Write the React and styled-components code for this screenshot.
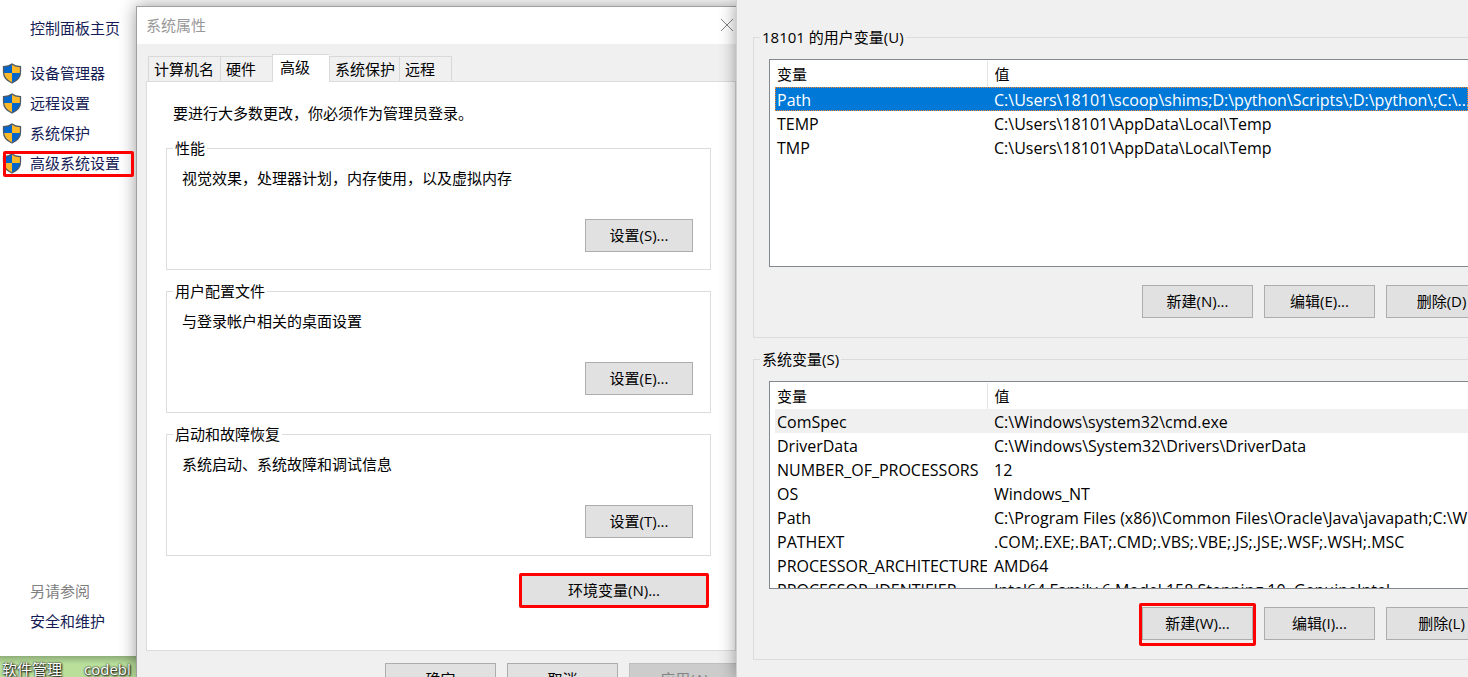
import React from "react";
import styled, { createGlobalStyle, css } from "styled-components";

const GlobalStyle = createGlobalStyle`
  * {
    box-sizing: border-box;
  }
  body {
    margin: 0;
    font-family: "Open Sans", "Noto Sans CJK SC", sans-serif;
    font-size: 15px;
    line-height: 24px;
    color: #000;
  }
`;

const sideLinks = [
  { text: "设备管理器" },
  { text: "远程设置" },
  { text: "系统保护" },
  { text: "高级系统设置", marked: true },
];

const tabs = [
  { text: "计算机名", width: 72 },
  { text: "硬件", width: 52 },
  { text: "高级", width: 57, active: true },
  { text: "系统保护", width: 70 },
  { text: "远程", width: 53 },
];

const sections = [
  { title: "性能", text: "视觉效果，处理器计划，内存使用，以及虚拟内存", button: "设置(S)..." },
  { title: "用户配置文件", text: "与登录帐户相关的桌面设置", button: "设置(E)..." },
  { title: "启动和故障恢复", text: "系统启动、系统故障和调试信息", button: "设置(T)..." },
];

const userVars = [
  { name: "Path", value: "C:\\Users\\18101\\scoop\\shims;D:\\python\\Scripts\\;D:\\python\\;C:\\...", state: "selected" },
  { name: "TEMP", value: "C:\\Users\\18101\\AppData\\Local\\Temp" },
  { name: "TMP", value: "C:\\Users\\18101\\AppData\\Local\\Temp" },
];

const systemVars = [
  { name: "ComSpec", value: "C:\\Windows\\system32\\cmd.exe", state: "inactive" },
  { name: "DriverData", value: "C:\\Windows\\System32\\Drivers\\DriverData" },
  { name: "NUMBER_OF_PROCESSORS", value: "12" },
  { name: "OS", value: "Windows_NT" },
  { name: "Path", value: "C:\\Program Files (x86)\\Common Files\\Oracle\\Java\\javapath;C:\\W..." },
  { name: "PATHEXT", value: ".COM;.EXE;.BAT;.CMD;.VBS;.VBE;.JS;.JSE;.WSF;.WSH;.MSC" },
  { name: "PROCESSOR_ARCHITECTURE", value: "AMD64" },
  { name: "PROCESSOR_IDENTIFIER", value: "Intel64 Family 6 Model 158 Stepping 10, GenuineIntel" },
];

const Shield = () => (
  <ShieldSvg viewBox="0 0 20 21" aria-hidden="true">
    <path d="M10 1C8 2.6 5 3.4 1.5 3.6V10H10z" fill="#0066cc" />
    <path d="M10 1c2 1.6 5 2.4 8.5 2.6V10H10z" fill="#fdb827" />
    <path d="M1.5 10H10v10C5 17.8 1.9 14.5 1.5 10z" fill="#fdb827" />
    <path d="M10 10h8.5c-.4 4.5-3.5 7.800-8.500 10z" fill="#0066cc" />
    <path
      d="M10 1C8 2.6 5 3.4 1.5 3.6V9c0 5 3 8.6 8.5 11 5.5-2.4 8.5-6 8.5-11V3.6C15 3.4 12 2.6 10 1z"
      fill="none"
      stroke="#4d5a66"
      strokeWidth="1.3"
    />
  </ShieldSvg>
);

const VariableTable = ({ label, rows }) => (
  <TableBox>
    <Table aria-label={label}>
      <colgroup>
        <NameCol />
        <col />
      </colgroup>
      <thead>
        <tr>
          <HeadCell>变量</HeadCell>
          <HeadCell>值</HeadCell>
        </tr>
      </thead>
      <tbody>
        {rows.map((row) => (
          <Row key={row.name} $state={row.state}>
            <Cell>{row.name}</Cell>
            <Cell>{row.value}</Cell>
          </Row>
        ))}
      </tbody>
    </Table>
  </TableBox>
);

const App = () => (
  <>
    <GlobalStyle />
    <Desktop>
      <Sidebar>
        <SideNav>
          <HomeLink href="#home">控制面板主页</HomeLink>
          {sideLinks.map((link) => (
            <SideItem key={link.text}>
              <Shield />
              <SideLink href="#settings">{link.text}</SideLink>
              {link.marked && <LinkMark />}
            </SideItem>
          ))}
        </SideNav>
        <SeeAlso>
          <SeeAlsoTitle>另请参阅</SeeAlsoTitle>
          <SideLink href="#security">安全和维护</SideLink>
        </SeeAlso>
        <Wallpaper>
          <span>软件管理</span>
          <span>codebl</span>
        </Wallpaper>
      </Sidebar>

      <PropertiesArea>
        <PropertiesWindow>
          <TitleBar>
            <Title>系统属性</Title>
            <CloseButton aria-label="关闭">
              <svg width="14" height="14" viewBox="0 0 14 14">
                <path d="M1 1l12 12M13 1L1 13" stroke="#808080" fill="none" />
              </svg>
            </CloseButton>
          </TitleBar>
          <TabList role="tablist">
            {tabs.map((tab) => (
              <Tab key={tab.text} role="tab" aria-selected={!!tab.active} $active={tab.active} $width={tab.width}>
                {tab.text}
              </Tab>
            ))}
          </TabList>
          <TabPanel role="tabpanel">
            <Notice>要进行大多数更改，你必须作为管理员登录。</Notice>
            <SectionList>
              {sections.map((section) => (
                <Section key={section.title}>
                  <Legend>{section.title}</Legend>
                  <SectionText>{section.text}</SectionText>
                  <Button $width={108}>{section.button}</Button>
                </Section>
              ))}
            </SectionList>
            <EnvironmentRow>
              <Button $width={188}>环境变量(N)...</Button>
              <ButtonMark />
            </EnvironmentRow>
          </TabPanel>
          <DialogFooter>
            <Button>确定</Button>
            <Button>取消</Button>
            <Button disabled>应用(A)</Button>
          </DialogFooter>
        </PropertiesWindow>
      </PropertiesArea>

      <VariablesWindow>
        <VariableGroup>
          <Legend>18101 的用户变量(U)</Legend>
          <VariableTable label="用户变量" rows={userVars} />
          <ButtonRow>
            <Button>新建(N)...</Button>
            <Button>编辑(E)...</Button>
            <Button>删除(D)</Button>
          </ButtonRow>
        </VariableGroup>
        <VariableGroup>
          <Legend>系统变量(S)</Legend>
          <VariableTable label="系统变量" rows={systemVars} />
          <ButtonRow>
            <MarkedButton>
              <Button>新建(W)...</Button>
              <NewMark />
            </MarkedButton>
            <Button>编辑(I)...</Button>
            <Button>删除(L)</Button>
          </ButtonRow>
        </VariableGroup>
      </VariablesWindow>
    </Desktop>
  </>
);

const Desktop = styled.main`
  display: grid;
  grid-template-columns: minmax(0, 136fr) minmax(0, 600fr) minmax(0, 732fr);
  grid-template-rows: minmax(0, 1fr);
  height: 100vh;
  overflow: hidden;
  background: #fff;
`;

const Sidebar = styled.aside`
  display: flex;
  flex-direction: column;
  min-height: 0;
  white-space: nowrap;
`;

const SideNav = styled.nav`
  display: flex;
  flex-direction: column;
  flex: 1;
  padding-top: 16px;
`;

const SideLink = styled.a`
  color: #151c55;
  text-decoration: none;
`;

const HomeLink = styled(SideLink)`
  margin: 0 0 18px 30px;
`;

const SideItem = styled.div`
  position: relative;
  display: flex;
  align-items: center;
  gap: 8px;
  height: 30px;
  padding-left: 2px;
`;

const ShieldSvg = styled.svg`
  width: 20px;
  height: 21px;
  flex: none;
`;

const mark = css`
  position: absolute;
  border: 3px solid #f00;
  border-radius: 2px;
  pointer-events: none;
`;

const LinkMark = styled.span`
  ${mark}
  inset: 3px 2px 1px 3px;
`;

const SeeAlso = styled.div`
  display: flex;
  flex-direction: column;
  gap: 6px;
  padding: 0 0 23px 30px;
`;

const SeeAlsoTitle = styled.span`
  color: #808080;
`;

const Wallpaper = styled.div`
  display: flex;
  flex: none;
  gap: 22px;
  height: 21px;
  padding: 1px 0 0 2px;
  overflow: hidden;
  background: linear-gradient(#8fae7a, #b9df9b 8px);
  color: #fff;
  text-shadow: 1px 1px 2px #000, 0 0 2px #000;
`;

const PropertiesArea = styled.div`
  display: flex;
  padding-top: 6px;
`;

const PropertiesWindow = styled.section`
  display: flex;
  flex: 1;
  flex-direction: column;
  min-width: 0;
  border: solid #a0a0a0;
  border-width: 1px 0 0 1px;
  background: #f0f0f0;
  box-shadow: 0 0 16px rgba(0, 0, 0, 0.4);
`;

const TitleBar = styled.header`
  display: flex;
  flex: none;
  align-items: center;
  justify-content: space-between;
  height: 37px;
  padding: 0 2px 2px 9px;
  background: #fff;
`;

const Title = styled.h1`
  margin: 0;
  color: #999;
  font-size: 15px;
  font-weight: 400;
`;

const CloseButton = styled.button`
  display: flex;
  padding: 0;
  border: 0;
  background: none;
`;

const TabList = styled.div`
  display: flex;
  flex: none;
  align-items: flex-end;
  height: 38px;
  margin-left: 11px;
`;

const Tab = styled.button`
  flex: none;
  width: ${(props) => props.$width}px;
  height: 26px;
  padding: 0 0 0 5px;
  border: 1px solid #d9d9d9;
  border-right-width: 0;
  background: #f0f0f0;
  color: #000;
  font: inherit;
  text-align: left;
  white-space: nowrap;

  &:last-child {
    border-right-width: 1px;
  }

  ${(props) =>
    props.$active &&
    css`
      position: relative;
      height: 28px;
      padding: 0 0 4px 7px;
      border-bottom: 0;
      background: #fff;
    `}
`;

const TabPanel = styled.div`
  display: flex;
  flex: none;
  flex-direction: column;
  margin: -1px 0 0 9px;
  padding: 19px 24px 43px 19px;
  border: 1px solid #dcdcdc;
  background: #fff;
`;

const Notice = styled.p`
  margin: 0 0 23px 7px;
`;

const SectionList = styled.div`
  display: flex;
  flex-direction: column;
  gap: 21px;
`;

const Fieldset = styled.section`
  display: flex;
  flex-direction: column;
  border: 1px solid #dcdcdc;
`;

const Legend = styled.h2`
  align-self: flex-start;
  margin: -13px 0 0 6px;
  padding: 0 2px;
  background: inherit;
  font-size: 15px;
  font-weight: 400;
`;

const Section = styled(Fieldset)`
  height: 122px;
  padding-bottom: 17px;
  background: #fff;

  > button {
    align-self: flex-end;
    margin: auto 17px 0 0;
  }
`;

const SectionText = styled.p`
  margin: 6px 0 0 15px;
`;

const Button = styled.button`
  flex: none;
  width: ${(props) => props.$width || 111}px;
  height: 33px;
  padding: 0 0 2px;
  border: 1px solid #adadad;
  background: #e1e1e1;
  color: #000;
  font: inherit;
  white-space: nowrap;

  &:disabled {
    border-color: #bfbfbf;
    background: #ccc;
    color: #838383;
  }
`;

const EnvironmentRow = styled.div`
  position: relative;
  align-self: flex-end;
  display: flex;
  margin: 18px 3px 0 0;
`;

const ButtonMark = styled.span`
  ${mark}
  inset: -1px;
`;

const DialogFooter = styled.footer`
  display: flex;
  flex: none;
  justify-content: flex-end;
  gap: 11px;
  margin-right: -4px;
  padding-top: 12px;
`;

const VariablesWindow = styled.section`
  position: relative;
  min-width: 0;
  padding: 37px 0 0 16px;
  background: #f0f0f0;
  border-left: 1px solid #d0d0d0;
  box-shadow: 0 0 16px rgba(0, 0, 0, 0.4);
`;

const VariableGroup = styled(Fieldset)`
  height: 301px;
  margin-bottom: 21px;
  border-right: 0;
  background: #f0f0f0;
`;

const TableBox = styled.div`
  height: 208px;
  margin: 10px 0 18px 15px;
  padding: 1px 0 0 5px;
  border: 1px solid #828790;
  border-right: 0;
  overflow: hidden;
  background: #fff;
`;

const Table = styled.table`
  width: 100%;
  border-collapse: collapse;
  table-layout: fixed;
`;

const NameCol = styled.col`
  width: 212px;
`;

const HeadCell = styled.th`
  height: 26px;
  padding: 0 0 0 7px;
  font-weight: 400;
  text-align: left;

  &:first-child {
    padding-left: 2px;
    border-right: 1px solid #e5e5e5;
  }
`;

const rowStates = {
  selected: css`
    background: #0078d7;
    color: #fff;
    outline: 1px dotted #ff8728;
    outline-offset: -1px;
  `,
  inactive: css`
    background: #f0f0f0;
  `,
};

const Row = styled.tr`
  ${(props) => rowStates[props.$state]}
`;

const Cell = styled.td`
  height: 24px;
  padding: 2px 0 0 7px;
  overflow: hidden;
  font-size: 16px;
  line-height: 22px;
  white-space: nowrap;

  &:first-child {
    padding-left: 2px;
  }
`;

const ButtonRow = styled.div`
  display: flex;
  justify-content: flex-end;
  gap: 11px;
  margin-right: -29px;
`;

const MarkedButton = styled.div`
  position: relative;
  display: flex;
`;

const NewMark = styled.span`
  ${mark}
  inset: -4px -3px -6px;
`;

export default App;
